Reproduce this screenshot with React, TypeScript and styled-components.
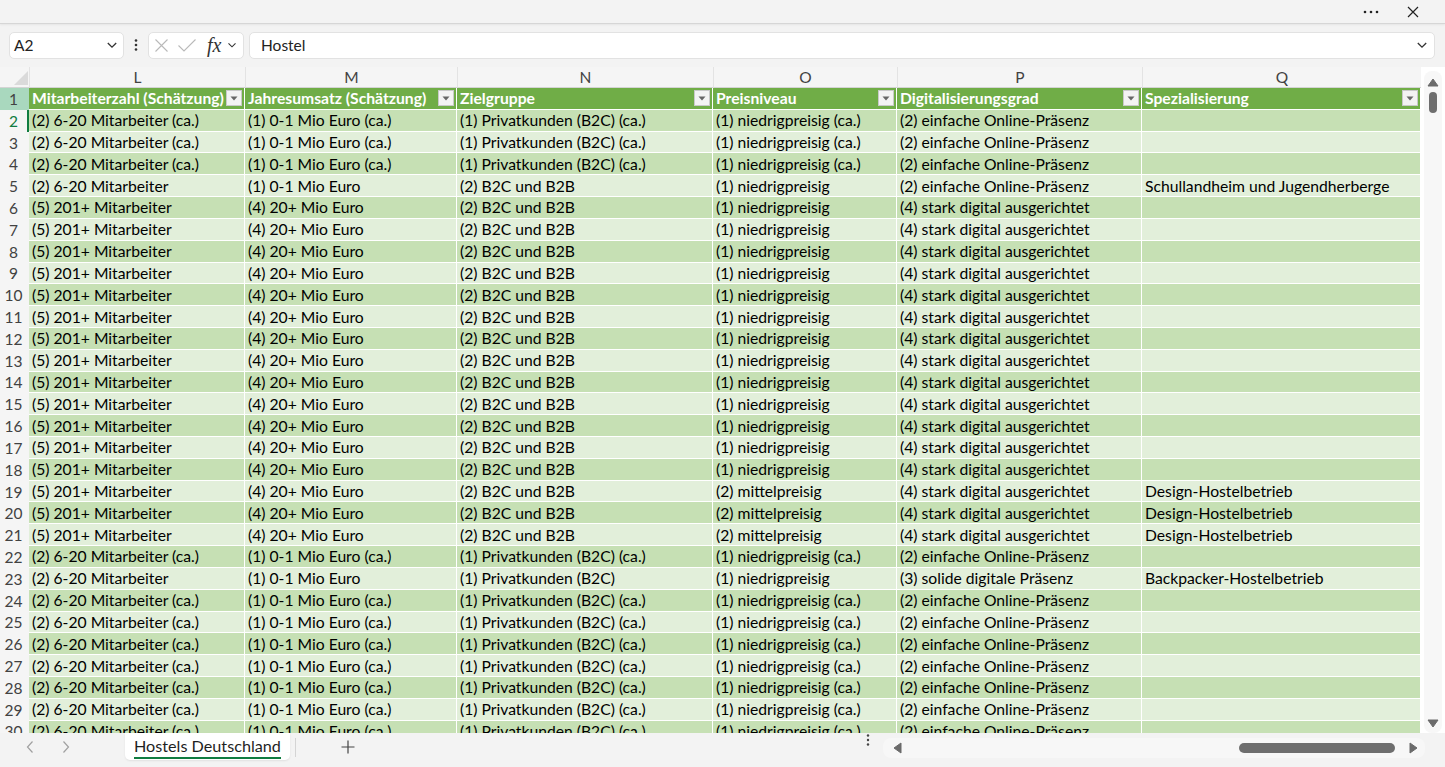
import React from 'react';
import styled, { createGlobalStyle } from 'styled-components';

const GlobalStyle = createGlobalStyle`
  html, body {
    margin: 0;
    padding: 0;
    background: #f3f3f3;
    overflow: hidden;
  }
  * {
    box-sizing: border-box;
  }
`;

const COLUMNS = [
  { letter: 'L', width: 216, title: 'Mitarbeiterzahl (Schätzung)' },
  { letter: 'M', width: 212, title: 'Jahresumsatz (Schätzung)' },
  { letter: 'N', width: 256, title: 'Zielgruppe' },
  { letter: 'O', width: 184, title: 'Preisniveau' },
  { letter: 'P', width: 245, title: 'Digitalisierungsgrad' },
  { letter: 'Q', width: 279, title: 'Spezialisierung' }
];

const GRID_COLUMNS = `29px ${COLUMNS.map((c) => `${c.width}px`).join(' ')}`;
const ROW_HEIGHT = 21.82;
const CELL_FONT = '15.7px';

const CA = ['(2) 6-20 Mitarbeiter (ca.)', '(1) 0-1 Mio Euro (ca.)', '(1) Privatkunden (B2C) (ca.)', '(1) niedrigpreisig (ca.)', '(2) einfache Online-Präsenz', ''];
const BIG = ['(5) 201+ Mitarbeiter', '(4) 20+ Mio Euro', '(2) B2C und B2B', '(1) niedrigpreisig', '(4) stark digital ausgerichtet', ''];
const DESIGN = ['(5) 201+ Mitarbeiter', '(4) 20+ Mio Euro', '(2) B2C und B2B', '(2) mittelpreisig', '(4) stark digital ausgerichtet', 'Design-Hostelbetrieb'];

const ROWS: string[][] = [
  CA,
  CA,
  CA,
  ['(2) 6-20 Mitarbeiter', '(1) 0-1 Mio Euro', '(2) B2C und B2B', '(1) niedrigpreisig', '(2) einfache Online-Präsenz', 'Schullandheim und Jugendherberge'],
  ...Array.from({ length: 13 }, () => BIG),
  DESIGN,
  DESIGN,
  DESIGN,
  CA,
  ['(2) 6-20 Mitarbeiter', '(1) 0-1 Mio Euro', '(1) Privatkunden (B2C)', '(1) niedrigpreisig', '(3) solide digitale Präsenz', 'Backpacker-Hostelbetrieb'],
  ...Array.from({ length: 7 }, () => CA)
];

const Chevron = ({ size = 10 }: { size?: number }) => (
  <svg width={size} height={size} viewBox="0 0 10 10">
    <path d="M1.5 3.3 L5 6.8 L8.5 3.3" fill="none" stroke="#333" strokeWidth="1.1" />
  </svg>
);

const Triangle = ({ dir, color = '#6b6b6b' }: { dir: 'up' | 'down' | 'left' | 'right'; color?: string }) => {
  const points = {
    up: '1,9 6,2 11,9',
    down: '1,3 6,10 11,3',
    left: '9,1 2,6 9,11',
    right: '3,1 10,6 3,11'
  }[dir];
  return (
    <svg width="12" height="12" viewBox="0 0 12 12">
      <polygon points={points} fill={color} strokeLinejoin="round" stroke={color} strokeWidth="1" />
    </svg>
  );
};

export default function App() {
  return (
    <Window>
      <GlobalStyle />
      <TitleBar>
        <TitleIcon>
          <svg width="16" height="4" viewBox="0 0 16 4">
            <circle cx="2" cy="2" r="1.3" fill="#222" />
            <circle cx="8" cy="2" r="1.3" fill="#222" />
            <circle cx="14" cy="2" r="1.3" fill="#222" />
          </svg>
        </TitleIcon>
        <TitleIcon>
          <svg width="12" height="12" viewBox="0 0 12 12">
            <path d="M1 1 L11 11 M11 1 L1 11" stroke="#222" strokeWidth="1.2" />
          </svg>
        </TitleIcon>
      </TitleBar>

      <FormulaBar>
        <NameBox>
          <span>A2</span>
          <Chevron size={12} />
        </NameBox>
        <Kebab>
          <svg width="4" height="14" viewBox="0 0 4 14">
            <circle cx="2" cy="2.5" r="1.3" fill="#333" />
            <circle cx="2" cy="7" r="1.3" fill="#333" />
            <circle cx="2" cy="11.5" r="1.3" fill="#333" />
          </svg>
        </Kebab>
        <FunctionBox>
          <svg width="15" height="15" viewBox="0 0 15 15">
            <path d="M1.5 1.5 L13.5 13.5 M13.5 1.5 L1.5 13.5" stroke="#b9b9b9" strokeWidth="1.1" />
          </svg>
          <svg width="20" height="15" viewBox="0 0 20 15">
            <path d="M1.5 7.5 L7 13 L18.5 1.5" fill="none" stroke="#b9b9b9" strokeWidth="1.1" />
          </svg>
          <FxLabel>fx</FxLabel>
          <Chevron size={10} />
        </FunctionBox>
        <FormulaInput>
          <span>Hostel</span>
          <Chevron size={12} />
        </FormulaInput>
      </FormulaBar>

      <SheetArea>
        <Sheet>
          <GridRow>
            <Corner>
              <svg width="14" height="14" viewBox="0 0 14 14">
                <polygon points="14,0 14,14 0,14" fill="#dadada" />
              </svg>
            </Corner>
            {COLUMNS.map((c) => (
              <ColumnHeader key={c.letter}>{c.letter}</ColumnHeader>
            ))}
          </GridRow>

          <GridRow>
            <RowHeader $highlight>1</RowHeader>
            {COLUMNS.map((c) => (
              <TableHeaderCell key={c.letter}>
                <span>{c.title}</span>
                <FilterButton>
                  <svg width="8" height="5" viewBox="0 0 8 5">
                    <polygon points="0.5,0.5 7.5,0.5 4,4.5" fill="#666" />
                  </svg>
                </FilterButton>
              </TableHeaderCell>
            ))}
          </GridRow>

          {ROWS.map((row, i) => {
            const rowNumber = i + 2;
            return (
              <GridRow key={rowNumber}>
                <RowHeader $selected={rowNumber === 2}>{rowNumber}</RowHeader>
                {row.map((value, j) => (
                  <DataCell key={j} $band={rowNumber % 2 === 0}>
                    {value}
                  </DataCell>
                ))}
              </GridRow>
            );
          })}
        </Sheet>

        <VScrollTrack>
          <Triangle dir="up" />
          <VThumb />
          <VSpacer />
          <Triangle dir="down" />
        </VScrollTrack>
      </SheetArea>

      <BottomBar>
        <NavArrow>
          <svg width="10" height="14" viewBox="0 0 10 14">
            <path d="M7.5 1.5 L2.5 7 L7.5 12.5" fill="none" stroke="#a0a0a0" strokeWidth="1.2" />
          </svg>
        </NavArrow>
        <NavArrow>
          <svg width="10" height="14" viewBox="0 0 10 14">
            <path d="M2.5 1.5 L7.5 7 L2.5 12.5" fill="none" stroke="#a0a0a0" strokeWidth="1.2" />
          </svg>
        </NavArrow>
        <SheetTab>
          <TabLabel>Hostels Deutschland</TabLabel>
        </SheetTab>
        <TabDivider />
        <AddSheet>
          <svg width="14" height="14" viewBox="0 0 14 14">
            <path d="M7 0.5 V13.5 M0.5 7 H13.5" stroke="#444" strokeWidth="1.2" />
          </svg>
        </AddSheet>
        <BottomSpacer />
        <Kebab>
          <svg width="4" height="14" viewBox="0 0 4 14">
            <circle cx="2" cy="2.5" r="1.2" fill="#444" />
            <circle cx="2" cy="7" r="1.2" fill="#444" />
            <circle cx="2" cy="11.5" r="1.2" fill="#444" />
          </svg>
        </Kebab>
        <HScrollTrack>
          <Triangle dir="left" />
          <HSpacer />
          <HThumb />
          <Triangle dir="right" />
        </HScrollTrack>
      </BottomBar>
    </Window>
  );
}

const Window = styled.div`
  width: 1445px;
  height: 767px;
  display: flex;
  flex-direction: column;
  background: #f3f3f3;
  font-family: Lato, 'Noto Sans', 'Liberation Sans', sans-serif;
  color: #000;
  overflow: hidden;
`;

const TitleBar = styled.div`
  height: 24px;
  flex-shrink: 0;
  display: flex;
  justify-content: flex-end;
  align-items: center;
  gap: 22px;
  padding-right: 22px;
  border-bottom: 1px solid #d6d6d6;
  box-shadow: 0 1px 2px rgba(0, 0, 0, 0.06);
`;

const TitleIcon = styled.div`
  display: flex;
  align-items: center;
  justify-content: center;
  width: 20px;
  height: 20px;
`;

const FormulaBar = styled.div`
  height: 43px;
  flex-shrink: 0;
  display: flex;
  align-items: center;
  padding: 0 10px 1px 9px;
  gap: 5px;
`;

const NameBox = styled.div`
  width: 115px;
  height: 27px;
  display: flex;
  align-items: center;
  justify-content: space-between;
  padding: 0 5px 0 4px;
  background: #fff;
  border: 1px solid #e2e2e2;
  border-radius: 5px;
  font-size: 15.5px;
  color: #222;
`;

const Kebab = styled.div`
  width: 14px;
  display: flex;
  align-items: center;
  justify-content: center;
`;

const FunctionBox = styled.div`
  width: 96px;
  height: 27px;
  display: flex;
  align-items: center;
  gap: 8px;
  padding: 0 3px 0 5px;
  background: #fff;
  border: 1px solid #e2e2e2;
  border-radius: 5px;
`;

const FxLabel = styled.span`
  font-family: 'Liberation Serif', 'DejaVu Serif', serif;
  font-style: italic;
  font-size: 20px;
  line-height: 20px;
  color: #333;
  margin-left: 2px;
  margin-right: -2px;
`;

const FormulaInput = styled.div`
  flex: 1;
  height: 27px;
  display: flex;
  align-items: center;
  justify-content: space-between;
  padding: 0 6px 0 11px;
  background: #fff;
  border: 1px solid #e2e2e2;
  border-radius: 5px;
  font-size: 15.5px;
  color: #222;
`;

const SheetArea = styled.div`
  flex: 1;
  min-height: 0;
  display: flex;
  background: #fff;
`;

const Sheet = styled.div`
  width: 1421px;
  overflow: hidden;
  background: #fff;
`;

const GridRow = styled.div`
  display: grid;
  grid-template-columns: ${GRID_COLUMNS};
  height: ${ROW_HEIGHT}px;

  &:first-child {
    height: 21px;
  }
`;

const Corner = styled.div`
  background: #f5f5f5;
  display: flex;
  align-items: flex-end;
  justify-content: flex-end;
  padding: 0 1px 2px 0;
  border-bottom: 1px solid #d4d4d4;
`;

const ColumnHeader = styled.div`
  background: #f5f5f5;
  display: flex;
  align-items: center;
  justify-content: center;
  font-size: 15.5px;
  color: #424242;
  border-left: 1px solid #e3e3e3;
  border-bottom: 1px solid #d4d4d4;
`;

const RowHeader = styled.div<{ $highlight?: boolean; $selected?: boolean }>`
  background: ${(p) => (p.$highlight ? '#a9d8be' : '#f5f5f5')};
  display: flex;
  align-items: center;
  justify-content: center;
  font-size: 15.5px;
  color: ${(p) => (p.$selected ? '#107c41' : '#424242')};
  border-right: 2px solid ${(p) => (p.$selected ? '#107c41' : 'transparent')};
`;

const TableHeaderCell = styled.div`
  background: #70ad47;
  color: #fff;
  font-weight: 700;
  font-size: ${CELL_FONT};
  display: flex;
  align-items: center;
  justify-content: space-between;
  padding: 0 2px 0 3px;
  border-right: 1px solid #fff;
  border-bottom: 1px solid #fff;
  white-space: nowrap;
  overflow: hidden;
`;

const FilterButton = styled.div`
  width: 16px;
  height: 16px;
  flex-shrink: 0;
  display: flex;
  align-items: center;
  justify-content: center;
  background: #f3f3f3;
  border: 1px solid #c9c9c9;
`;

const DataCell = styled.div<{ $band: boolean }>`
  background: ${(p) => (p.$band ? '#c6e0b4' : '#e2efda')};
  font-size: ${CELL_FONT};
  color: #000;
  display: flex;
  align-items: center;
  padding-left: 3px;
  border-right: 1px solid #fff;
  border-bottom: 1px solid #fff;
  white-space: nowrap;
  overflow: hidden;
`;

const VScrollTrack = styled.div`
  width: 18px;
  margin: 4px 3px 0 3px;
  padding: 6px 0 4px;
  display: flex;
  flex-direction: column;
  align-items: center;
  background: #f7f7f7;
  border-radius: 8px;
`;

const VThumb = styled.div`
  width: 8px;
  height: 21px;
  margin-top: 3px;
  border-radius: 4px;
  background: #6e6e6e;
`;

const VSpacer = styled.div`
  flex: 1;
`;

const BottomBar = styled.div`
  height: 34px;
  flex-shrink: 0;
  display: flex;
  align-items: flex-start;
  background: #f3f3f3;
`;

const NavArrow = styled.div`
  width: 36px;
  height: 28px;
  display: flex;
  align-items: center;
  justify-content: center;
  &:first-child {
    margin-left: 12px;
  }
`;

const SheetTab = styled.div`
  margin-left: 41px;
  height: 27px;
  padding: 0 9px;
  display: flex;
  align-items: flex-start;
  background: #fff;
  border-radius: 0 0 5px 5px;
  box-shadow: 0 1px 2px rgba(0, 0, 0, 0.08);
`;

const TabLabel = styled.span`
  font-size: 16.2px;
  line-height: 20px;
  margin-top: 3px;
  color: #1f1f1f;
  padding-bottom: 1px;
  border-bottom: 2.5px solid #107c41;
`;

const TabDivider = styled.div`
  width: 1px;
  height: 19px;
  margin: 5px 0 0 5px;
  background: #d4d4d4;
`;

const AddSheet = styled.div`
  width: 40px;
  height: 28px;
  margin-left: 32px;
  display: flex;
  align-items: center;
  justify-content: center;
`;

const BottomSpacer = styled.div`
  flex: 1;
`;

const HScrollTrack = styled.div`
  width: 542px;
  height: 20px;
  margin: 5px 20px 0 8px;
  padding: 0 6px 0 9px;
  display: flex;
  align-items: center;
  background: #f7f7f7;
  border-radius: 8px;
`;

const HSpacer = styled.div`
  flex: 1;
`;

const HThumb = styled.div`
  width: 156px;
  height: 10px;
  margin-right: 12px;
  border-radius: 5px;
  background: #6e6e6e;
`;
